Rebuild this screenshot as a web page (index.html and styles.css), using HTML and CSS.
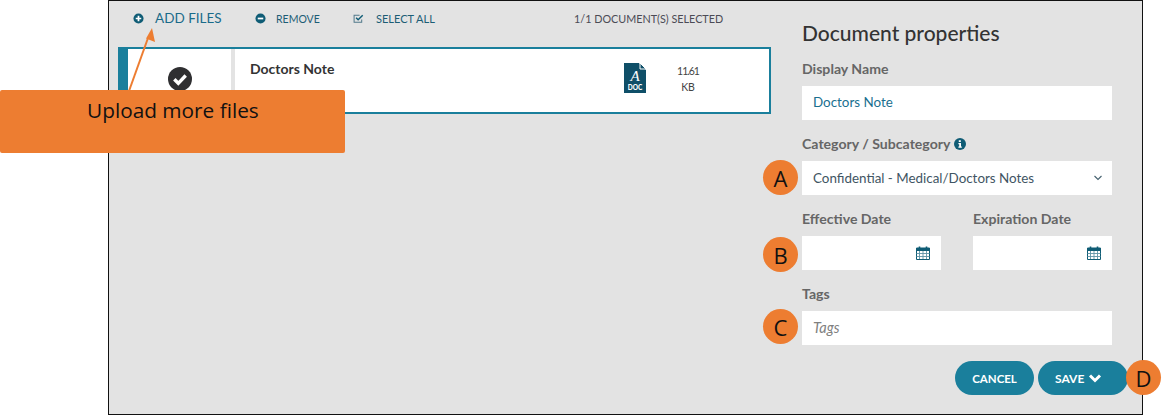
FILE: index.html
```html
<!DOCTYPE html>
<html lang="en">
<head>
    <meta charset="UTF-8">
    <title>Document properties</title>
    <link rel="stylesheet" href="styles.css">
</head>
<body>
    <div class="frame">
        <div class="files">
            <div class="toolbar">
                <span class="tool tool-add">
                    <svg class="tool-icon" viewBox="0 0 12 12"><circle cx="6" cy="6" r="5.500" fill="#0f5c75"/><path d="M3 6h6M6 3v6" stroke="#fff" stroke-width="1.900"/></svg>
                    ADD FILES
                </span>
                <span class="tool tool-remove">
                    <svg class="tool-icon" viewBox="0 0 12 12"><circle cx="6" cy="6" r="5.500" fill="#0f5c75"/><path d="M3 6h6" stroke="#fff" stroke-width="1.900"/></svg>
                    <span class="tool-text">REMOVE</span>
                </span>
                <span class="tool tool-select">
                    <svg class="tool-icon" viewBox="0 0 12 12"><path d="M9.500 7v3H1.200V2.500h6" fill="none" stroke="#52798a" stroke-width="1.100"/><path d="M3.400 5.200l2.200 2.200 5-5" fill="none" stroke="#0f5c75" stroke-width="1.600"/></svg>
                    SELECT ALL
                </span>
                <span class="selected-count">1/1 DOCUMENT(S) SELECTED</span>
            </div>
            <div class="doc-row">
                <div class="doc-check">
                    <svg class="check-icon" viewBox="0 0 24 24"><circle cx="12" cy="12" r="12" fill="#2f2f31"/><path d="M6.300 12.300l4 4 7.400-7.800" fill="none" stroke="#fff" stroke-width="3.400"/></svg>
                </div>
                <div class="doc-info">
                    <div class="doc-name">Doctors Note</div>
                    <svg class="doc-icon" viewBox="0 0 22 30">
                        <path d="M0 0h15l7 7v23H0z" fill="#0f4f68"/>
                        <path d="M16 0l6 6h-6z" fill="#0f4f68" stroke="#fff" stroke-width="1"/>
                        <text x="11" y="18" class="doc-letter">A</text>
                        <text x="11" y="27" class="doc-type">DOC</text>
                    </svg>
                    <div class="doc-size"><span class="doc-size-num">11.61</span><br>KB</div>
                </div>
            </div>
        </div>
        <div class="props">
            <h2 class="props-title">Document properties</h2>
            <label class="field-label">Display Name</label>
            <div class="input input-name">Doctors Note</div>
            <label class="field-label">
                Category / Subcategory
                <svg class="info-icon" viewBox="0 0 12 12"><circle cx="6" cy="6" r="6" fill="#0f5c75"/><path d="M4.800 2.300h2v1.600h-2zM4.400 5h2.600v3.600h.8v1.200H4.400V8.600h.8V6.200h-.8z" fill="#fff"/></svg>
            </label>
            <div class="input input-select">
                Confidential - Medical/Doctors Notes
                <svg class="select-arrow" viewBox="0 0 10 6"><path d="M1.500 1l3.500 3.500L8.500 1" fill="none" stroke="#44606e" stroke-width="1.100"/></svg>
            </div>
            <div class="date-row">
                <div class="date-col">
                    <label class="field-label">Effective Date</label>
                    <div class="input input-date">
                        <svg class="cal-icon" viewBox="0 0 14 14"><path d="M.5 2h13v11.500H.5z" fill="#fff" stroke="#0f5c75"/><path d="M.5 2h13v3H.5z" fill="#0f5c75"/><path d="M3.500 .5v3M10.500 .5v3" stroke="#0f5c75" stroke-width="1.600"/><path d="M.5 7.500h13M.5 10.500h13M3.500 5v8M7 5v8M10.500 5v8" stroke="#5f93a6" stroke-width=".9"/></svg>
                    </div>
                </div>
                <div class="date-col">
                    <label class="field-label">Expiration Date</label>
                    <div class="input input-date">
                        <svg class="cal-icon" viewBox="0 0 14 14"><path d="M.5 2h13v11.500H.5z" fill="#fff" stroke="#0f5c75"/><path d="M.5 2h13v3H.5z" fill="#0f5c75"/><path d="M3.500 .5v3M10.500 .5v3" stroke="#0f5c75" stroke-width="1.600"/><path d="M.5 7.500h13M.5 10.500h13M3.500 5v8M7 5v8M10.500 5v8" stroke="#5f93a6" stroke-width=".9"/></svg>
                    </div>
                </div>
            </div>
            <label class="field-label">Tags</label>
            <div class="input input-tags">Tags</div>
            <div class="actions">
                <button class="btn btn-cancel">CANCEL</button>
                <button class="btn btn-save">SAVE
                    <svg class="save-arrow" viewBox="0 0 14 10"><path d="M2 2.500l5 5 5-5" fill="none" stroke="#fff" stroke-width="3"/></svg>
                </button>
            </div>
        </div>
    </div>

    <!-- callouts on top of the screenshot -->
    <svg class="callout-arrow" viewBox="0 0 40 80"><path d="M4 70L23 17" stroke="#ed7d31" stroke-width="2"/><path d="M27 7l3 14-9-3.500z" fill="#ed7d31"/></svg>
    <div class="callout-box">Upload more files</div>
    <div class="marker marker-a">A</div>
    <div class="marker marker-b">B</div>
    <div class="marker marker-c">C</div>
    <div class="marker marker-d">D</div>
</body>
</html>
```

FILE: styles.css
```css
* {
    box-sizing: border-box;
}

body {
    margin: 0;
    height: 415px;
    overflow: hidden;
    background-color: #fff;
    font-family: 'Lato', sans-serif;
    color: #333;
}

.frame {
    display: flex;
    margin-left: 108px;
    width: 1035px;
    height: 415px;
    background-color: #e3e3e3;
    border: 1px solid #111;
}

.files {
    width: 653px;
    margin-left: 9px;
}

.toolbar {
    display: flex;
    align-items: center;
    height: 46px;
    padding-left: 15px;
    padding-bottom: 12px;
    color: #1c5d75;
    font-size: 11px;
}

.tool {
    display: flex;
    align-items: center;
    gap: 11px;
}

.tool-add {
    width: 122px;
    font-size: 13.500px;
    color: #1a6b8a;
}

.tool-remove {
    width: 98px;
    gap: 10px;
    font-size: 10.500px;
}

.tool-text {
    padding-top: 1px;
}

.tool-select {
    width: 221px;
    gap: 12px;
}

.tool-icon {
    width: 11px;
    height: 11px;
}

.selected-count {
    color: #4b4b55;
    font-size: 10.800px;
    white-space: nowrap;
}

.doc-row {
    display: flex;
    height: 67px;
    background-color: #fff;
    border: 2px solid #1a7f9c;
    border-left-width: 10px;
}

.doc-check {
    display: flex;
    justify-content: center;
    width: 107px;
    padding-top: 18px;
    border-right: 4px solid #e3e3e3;
}

.check-icon {
    width: 24px;
    height: 24px;
}

.doc-info {
    display: flex;
    flex: 1;
    padding-left: 15px;
}

.doc-name {
    width: 374px;
    padding-top: 11px;
    font-size: 14px;
    font-weight: 700;
}

.doc-icon {
    width: 22px;
    height: 30px;
    margin-top: 14px;
}

.doc-letter {
    font-family: 'Liberation Serif', serif;
    font-style: italic;
    font-size: 15px;
    fill: #fff;
    text-anchor: middle;
}

.doc-type {
    font-size: 6.500px;
    font-weight: 900;
    fill: #fff;
    text-anchor: middle;
}

.doc-size {
    width: 38px;
    margin-left: 23px;
    padding-top: 14px;
    font-size: 10.500px;
    line-height: 16px;
    text-align: center;
    color: #444;
}

.doc-size-num {
    letter-spacing: -1px;
}

.props {
    width: 310px;
    margin-left: 31px;
    padding-top: 19px;
}

.props-title {
    margin: 0 0 16px;
    font-size: 21px;
    font-weight: 500;
    line-height: 25px;
    color: #333;
}

.field-label {
    display: flex;
    align-items: center;
    gap: 4px;
    height: 17px;
    margin-bottom: 8px;
    padding-bottom: 2px;
    font-size: 14.100px;
    font-weight: 700;
    color: #666;
}

.info-icon {
    width: 12px;
    height: 12px;
}

.input {
    display: flex;
    align-items: center;
    height: 34px;
    margin-bottom: 16px;
    padding: 0 11px;
    background-color: #fff;
    font-size: 13.400px;
}

.input-name {
    padding-bottom: 2px;
    color: #1a6f8f;
}

.input-select {
    justify-content: space-between;
    padding-right: 9px;
    color: #3f5563;
}

.select-arrow {
    width: 10px;
    height: 6px;
}

.date-row {
    display: flex;
    gap: 32px;
}

.date-col {
    width: 139px;
}

.input-date {
    justify-content: flex-end;
}

.cal-icon {
    width: 14px;
    height: 14px;
}

.input-tags {
    padding-bottom: 1px;
    font-size: 14.500px;
    font-style: italic;
    color: #808080;
}

.actions {
    display: flex;
    justify-content: flex-end;
    gap: 4px;
    margin-right: -16px;
}

.btn {
    height: 34px;
    border: none;
    border-radius: 17px;
    background-color: #1a7f9c;
    color: #fff;
    font-family: inherit;
    font-size: 11.500px;
    font-weight: 700;
}

.btn-cancel {
    width: 79px;
}

.btn-save {
    display: flex;
    align-items: center;
    gap: 4px;
    width: 90px;
    padding-left: 17px;
    font-size: 12px;
}

.save-arrow {
    width: 14px;
    height: 10px;
}

.callout-arrow {
    position: absolute;
    left: 125px;
    top: 21px;
    width: 40px;
    height: 80px;
}

.callout-box {
    position: absolute;
    left: 0;
    top: 90px;
    width: 345px;
    height: 63px;
    padding: 6px 0 0 87px;
    background-color: #ed7d31;
    border-radius: 2px;
    font-family: 'Open Sans', sans-serif;
    font-size: 20.800px;
    color: #111;
}

.marker {
    position: absolute;
    display: flex;
    align-items: center;
    justify-content: center;
    width: 35px;
    height: 35px;
    border-radius: 50%;
    background-color: #ed7d31;
    font-family: 'Open Sans', sans-serif;
    font-size: 22px;
    color: #111;
}

.marker-a {
    left: 763px;
    top: 160px;
}

.marker-b {
    left: 763px;
    top: 237px;
}

.marker-c {
    left: 763px;
    top: 309px;
}

.marker-d {
    left: 1126px;
    top: 360px;
}
```
